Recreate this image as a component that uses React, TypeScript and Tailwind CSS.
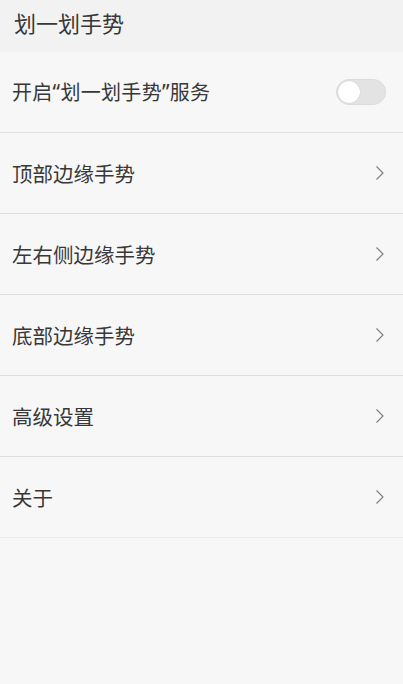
import React from "react";

const font = { fontFamily: '"Noto Sans CJK SC", "Noto Sans", sans-serif' };

function Chevron() {
  return (
    <svg width="10" height="16" viewBox="0 0 10 16" className="shrink-0">
      <path d="M1.5 1.5 L8 8 L1.5 14.5" fill="none" stroke="#808080" strokeWidth="1.2" />
    </svg>
  );
}

const rows = ["顶部边缘手势", "左右侧边缘手势", "底部边缘手势", "高级设置", "关于"];

export default function App() {
  return (
    <div className="w-[403px] h-[684px] bg-[#f7f7f7] text-[#383838]" style={font}>
      <div className="h-[52px] bg-[#f2f2f2] flex items-center pl-[14px] pb-[8px]">
        <span className="text-[22px] leading-none">划一划手势</span>
      </div>
      <div className="h-[81px] flex items-center justify-between pl-[12px] pr-[17px] border-b border-[#e2e2e2]">
        <span className="text-[20px] leading-none tracking-[0.3px]">
          开启<span className="font-['Noto_Sans'] text-[21px]">“</span>划一划手势<span className="font-['Noto_Sans'] text-[21px]">”</span>服务
        </span>
        <div className="w-[50px] h-[26px] rounded-full bg-[#e3e3e3] border border-[#dcdcdc] relative">
          <div className="absolute left-[1px] top-[1px] w-[22px] h-[22px] rounded-full bg-white shadow-[0_0_1px_rgba(0,0,0,0.2)]" />
        </div>
      </div>
      {rows.map((r, i) => (
        <div
          key={r}
          className={`h-[81px] flex items-center justify-between pl-[12px] pr-[18px] border-b ${i === rows.length - 1 ? "border-[#ececec]" : "border-[#dedede]"}`}
        >
          <span className="text-[20.5px] leading-none">{r}</span>
          <Chevron />
        </div>
      ))}
    </div>
  );
}
